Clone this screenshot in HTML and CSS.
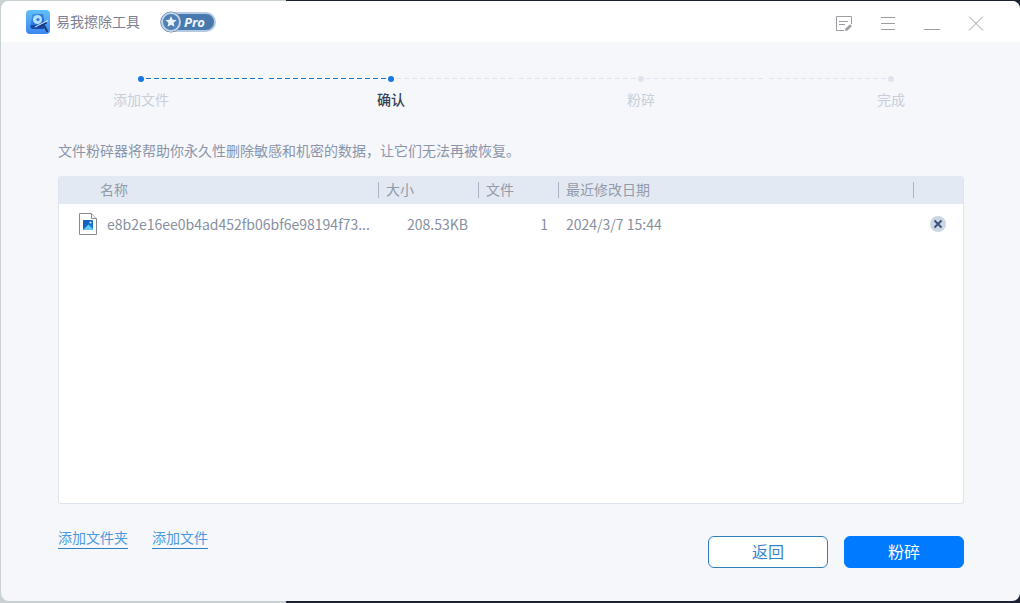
FILE: index.html
```
<!DOCTYPE html>
<html lang="zh-CN">
<head>
    <meta charset="UTF-8">
    <meta name="viewport" content="width=device-width, initial-scale=1.0">
    <title>易我擦除工具</title>
    <link rel="stylesheet" href="styles.css">
</head>
<body>
    <div class="window">
        <header class="titlebar">
            <svg class="logo" viewBox="0 0 24 24" aria-hidden="true">
                <defs>
                    <linearGradient id="logo-bg" x1="0" y1="0" x2="0" y2="1">
                        <stop offset="0" stop-color="#62c0fa"/>
                        <stop offset="1" stop-color="#3d86f2"/>
                    </linearGradient>
                    <linearGradient id="drive" x1="0" y1="0" x2="1" y2="1">
                        <stop offset="0" stop-color="#3f98ea"/>
                        <stop offset="1" stop-color="#1c5cc8"/>
                    </linearGradient>
                </defs>
                <rect width="24" height="24" rx="4" fill="url(#logo-bg)"/>
                <path d="M6.500 4h10.500l2 12H4.500z" fill="url(#drive)"/>
                <path d="M4.500 15h14.500v2.500l-1.500 1.500H6l-1.500-1.500z" fill="#1a4aa6"/>
                <circle cx="11.500" cy="9.500" r="4.500" fill="#b4e2fc"/>
                <circle cx="12" cy="9.500" r="1.600" fill="#2f7bdc"/>
                <path d="M11 16l9-4.500 1 2-7 3.500z" fill="#17397c"/>
                <path d="M9 17l13-6.500" stroke="#e3f4ff" stroke-width="1"/>
                <path d="M18.500 16l3 6" stroke="#1b3a6e" stroke-width="1.800"/>
            </svg>
            <h1>易我擦除工具</h1>
            <span class="pro">
                <svg viewBox="0 0 22 22" aria-hidden="true">
                    <circle cx="11" cy="11" r="10" fill="#4778ae" stroke="#5b7698" stroke-width="1"/>
                    <circle cx="11" cy="11" r="9" fill="#4f80b6" stroke="#c2d4ea" stroke-width="2"/>
                    <path d="M11 5l1.600 3.700 4 .4-3 2.700.9 3.900-3.500-2-3.500 2 .9-3.900-3-2.700 4-.4z" fill="#eaf3fc"/>
                </svg>
                <b>Pro</b>
            </span>
            <nav class="controls">
                <button type="button" aria-label="反馈">
                    <svg viewBox="0 0 16 16"><path d="M15.500 8V.5H.5v14H8M3 5.500h9M3 8.500h6"/><path class="pen" d="M9 15l.5-2.500 4.500-4 2 1.500-4.500 4.500z"/></svg>
                </button>
                <button type="button" aria-label="菜单">
                    <svg viewBox="0 0 16 16"><path d="M1 1.500h14M1 7.500h14M1 13.500h14"/></svg>
                </button>
                <button type="button" aria-label="最小化">
                    <svg viewBox="0 0 16 16"><path d="M0 13.500h16"/></svg>
                </button>
                <button type="button" aria-label="关闭">
                    <svg viewBox="0 0 16 16"><path d="M1 .5l14 14M15 .5l-14 14"/></svg>
                </button>
            </nav>
        </header>

        <ol class="steps">
            <li class="done"><i class="dot"></i><span>添加文件</span></li>
            <li class="current"><i class="dot"></i><span>确认</span></li>
            <li><i class="dot"></i><span>粉碎</span></li>
            <li><i class="dot"></i><span>完成</span></li>
        </ol>

        <main>
            <p class="hint">文件粉碎器将帮助你永久性删除敏感和机密的数据，让它们无法再被恢复。</p>
            <div class="file-list">
                <table>
                    <colgroup>
                        <col class="col-name">
                        <col class="col-size">
                        <col class="col-count">
                        <col>
                        <col class="col-remove">
                    </colgroup>
                    <thead>
                        <tr>
                            <th>名称</th>
                            <th>大小</th>
                            <th>文件</th>
                            <th>最近修改日期</th>
                            <th></th>
                        </tr>
                    </thead>
                    <tbody>
                        <tr>
                            <td>
                                <div class="file">
                                    <svg viewBox="0 0 18 22" aria-hidden="true">
                                        <defs>
                                            <linearGradient id="photo" x1="0" y1="0" x2="1" y2="1">
                                                <stop offset="0" stop-color="#1357b4"/>
                                                <stop offset="1" stop-color="#1c7ddd"/>
                                            </linearGradient>
                                        </defs>
                                        <path d="M.5.5h12l5 5v16H.5z" fill="#fff" stroke="#8b8985"/>
                                        <path d="M12.500.5v5h5" fill="#f4f4f4" stroke="#8b8985"/>
                                        <rect x="4" y="7" width="10" height="10" rx="1" fill="url(#photo)"/>
                                        <path d="M4.500 16.500l5-5 4.500 4.500-.5 1h-9z" fill="#63c9f7"/>
                                        <circle cx="11.500" cy="9.500" r="1" fill="#d9f2ff"/>
                                    </svg>
                                    <span>e8b2e16ee0b4ad452fb06bf6e98194f73...</span>
                                </div>
                            </td>
                            <td class="num">208.53KB</td>
                            <td class="num">1</td>
                            <td>2024/3/7 15:44</td>
                            <td class="remove-cell">
                                <button type="button" class="remove" aria-label="移除">
                                    <svg viewBox="0 0 16 16"><circle cx="8" cy="8" r="8" fill="#cbd5e4"/><path d="M4.500 4.500l7 7M11.500 4.500l-7 7" stroke="#3a4f75" stroke-width="1.800"/></svg>
                                </button>
                            </td>
                        </tr>
                    </tbody>
                </table>
            </div>
        </main>

        <footer>
            <a href="#">添加文件夹</a>
            <a href="#">添加文件</a>
            <div class="actions">
                <button type="button" class="btn">返回</button>
                <button type="button" class="btn primary">粉碎</button>
            </div>
        </footer>
    </div>
</body>
</html>
```
FILE: styles.css
```
* {
    box-sizing: border-box;
}

body {
    margin: 0;
    height: 100vh;
    padding: 1px 0 2px 1px;
    display: flex;
    font-family: "Noto Sans", "Noto Sans CJK SC", sans-serif;
    font-size: 14px;
    line-height: 20px;
    color: #8790a0;
    /* strip of desktop showing round the window */
    background: linear-gradient(to right, #c9d1d2 28%, #1c2233 28%);
}

button {
    font: inherit;
    padding: 0;
    border: 0;
    background: none;
    cursor: pointer;
}

svg {
    display: block;
    fill: none;
}

.window {
    flex: 1;
    display: flex;
    flex-direction: column;
    background: #f5f7fb;
    border-radius: 8px;
    overflow: hidden;
}

/* title bar */
.titlebar {
    display: flex;
    align-items: center;
    height: 41px;
    padding: 0 36px 0 25px;
    background: #fff;
}

.logo {
    width: 24px;
    height: 24px;
}

h1 {
    margin: 0 20px 0 6px;
    font-size: 14px;
    font-weight: normal;
    color: #7d8194;
}

.pro {
    display: flex;
    align-items: center;
    width: 56px;
    height: 20px;
    border: 2px solid #b5c8e1;
    border-radius: 10px;
    background: #4778ae;
    color: #f0f6fd;
    font-size: 13px;
    font-style: italic;
}

.pro svg {
    flex: none;
    width: 22px;
    height: 22px;
    margin: 0 2px 0 -2px;
}

.controls {
    display: flex;
    gap: 28px;
    margin-left: auto;
    padding-top: 4px;
}

.controls svg {
    width: 16px;
    height: 16px;
    stroke: #9a9ea3;
}

.controls .pen {
    fill: #9a9ea3;
    stroke: none;
}

/* progress */
.steps {
    display: flex;
    margin: 0;
    padding: 34px 4px 0 15px;
    list-style: none;
    color: #c9ced9;
}

.steps li {
    flex: 1;
    display: grid;
    grid-template-columns: 1fr 6px 1fr;
    grid-template-rows: 6px 20px;
    row-gap: 8px;
    align-items: center;
    --line: #e0e3ec;
    --line-before: #e0e3ec;
}

.steps li::before,
.steps li::after {
    content: "";
    grid-row: 1;
    height: 1px;
    margin-bottom: 1px;
    background: linear-gradient(to right, transparent 2px, var(--line) 2px 7px, transparent 7px) left top / 8px 1px;
}

.steps li::before {
    grid-column: 1;
    background: linear-gradient(to left, transparent 2px, var(--line-before) 2px 7px, transparent 7px) right top / 8px 1px;
}

.steps li::after {
    grid-column: 3;
}

.steps li:first-child::before,
.steps li:last-child::after {
    visibility: hidden;
}

.steps .done {
    --line: #1f7ac4;
}

.steps .current {
    --line-before: #1f7ac4;
}

.dot {
    grid-row: 1;
    grid-column: 2;
    height: 6px;
    border-radius: 50%;
    background: #e0e3ec;
}

.done .dot,
.current .dot {
    background: #1676e3;
}

.steps span {
    grid-row: 2;
    grid-column: 1 / -1;
    text-align: center;
}

.current span {
    font-weight: 500;
    color: #364153;
}

/* file list */
main {
    flex: 1;
    display: flex;
    flex-direction: column;
    padding: 31px 56px 0 57px;
}

.hint {
    margin: 0 0 15px;
    color: #8b95aa;
}

.file-list {
    flex: 1;
    border: 1px solid #dfe5ee;
    border-top: 0;
    border-radius: 3px;
    background: #fff;
    overflow: hidden;
}

table {
    width: 100%;
    table-layout: fixed;
    border-collapse: collapse;
}

.col-name {
    width: 319px;
}

.col-size {
    width: 100px;
}

.col-count {
    width: 80px;
}

.col-remove {
    width: 50px;
}

th {
    height: 28px;
    padding: 0 8px;
    text-align: left;
    font-weight: normal;
    color: #929bab;
    background: linear-gradient(#aab4c4, #aab4c4) left center / 1px 16px no-repeat #e3e9f2;
}

th:first-child {
    padding-left: 41px;
    background: #e3e9f2;
}

td {
    height: 40px;
    padding: 0 8px;
    font-family: "Noto Sans CJK SC", sans-serif;
}

td:first-child {
    padding: 0 0 0 20px;
}

.file {
    display: flex;
    align-items: center;
    gap: 10px;
    white-space: nowrap;
}

.file svg {
    width: 18px;
    height: 22px;
}

.num {
    padding-right: 10px;
    text-align: right;
}

.remove-cell {
    padding: 0 17px;
}

.remove {
    display: block;
}

.remove svg {
    width: 16px;
    height: 16px;
}

/* bottom bar */
footer {
    display: flex;
    align-items: flex-start;
    gap: 24px;
    padding: 24px 56px 33px 57px;
}

footer a {
    border-bottom: 1px solid #2e80c4;
    color: #4b9ae0;
    text-decoration: none;
}

.actions {
    display: flex;
    gap: 16px;
    margin: 8px 0 0 auto;
}

.btn {
    width: 120px;
    height: 32px;
    border: 1px solid #2f7fc0;
    border-radius: 6px;
    background: #fff;
    color: #3586cf;
    font-size: 16px;
}

.primary {
    border-color: #007bff;
    background: #007bff;
    color: #fff;
}
```
